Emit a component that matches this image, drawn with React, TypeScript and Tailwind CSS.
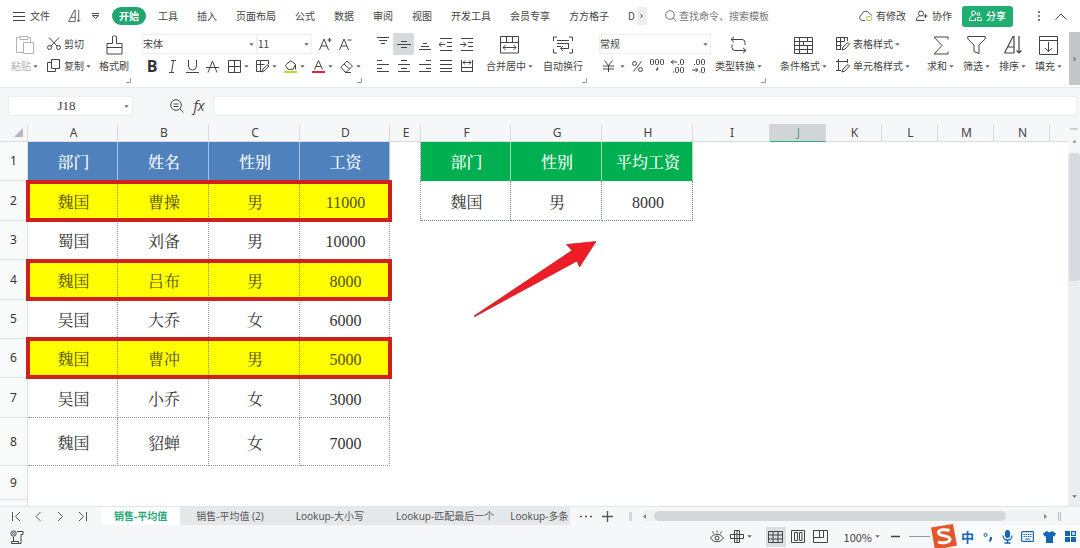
import React from "react";
import clsx from "clsx";

type Kids = { children?: React.ReactNode };

function Svg({ w, h, sw = 1, className, children }: Kids & { w: number; h: number; sw?: number; className?: string }) {
  return (
    <svg
      width={w}
      height={h}
      viewBox={`0 0 ${w} ${h}`}
      fill="none"
      stroke="currentColor"
      strokeWidth={sw}
      className={clsx("shrink-0", className)}
      aria-hidden="true"
    >
      {children}
    </svg>
  );
}

function Caret({ className }: { className?: string }) {
  return (
    <svg width="5" height="3" viewBox="0 0 5 3" className={clsx("shrink-0 text-[#666]", className)} aria-hidden="true">
      <path d="M.3 .2h4.400L2.500 2.800z" fill="currentColor" />
    </svg>
  );
}

function Corner() {
  return (
    <Svg w={5} h={5} className="absolute right-0 bottom-1 text-[#999]">
      <path d="M4.5 0V4.5H0" />
    </Svg>
  );
}

function BigButton({ label, caret, icon, muted }: { label: string; caret?: boolean; icon: React.ReactNode; muted?: boolean }) {
  return (
    <button className={clsx("flex shrink-0 flex-col items-center", muted && "text-[#b3b3b3]")}>
      <span className="flex h-6 items-center justify-center">{icon}</span>
      <span className="flex h-[18px] items-center gap-[2px]">
        {label}
        {caret && <Caret />}
      </span>
    </button>
  );
}

function RowButton({ label, caret, icon }: { label: string; caret?: boolean; icon: React.ReactNode }) {
  return (
    <button className="flex h-[22px] items-center gap-[3px]">
      {icon}
      <span className="flex items-center gap-[2px]">
        {label}
        {caret && <Caret />}
      </span>
    </button>
  );
}

function Tool({ name, caret, children }: Kids & { name: string; caret?: boolean }) {
  return (
    <button
      aria-label={name}
      className={clsx("flex h-[22px] items-center", caret ? "w-7 gap-[3px] pl-[6px]" : "w-5 justify-center")}
    >
      {children}
      {caret && <Caret />}
    </button>
  );
}

function Select({ name, value, className }: { name: string; value: string; className: string }) {
  return (
    <span className={clsx("relative flex h-5 items-center", className)}>
      <select aria-label={name} className="h-full w-full appearance-none border border-[#eeeff0] bg-white outline-none">
        <option>{value}</option>
      </select>
      <Caret className="pointer-events-none absolute right-[3px]" />
    </span>
  );
}

const alignIcons: { name: string; d: string }[][] = [
  [
    { name: "顶端对齐", d: "M1 .5h12M3 3.5h8M5 6.5h4" },
    { name: "垂直居中", d: "M4 4.5h6M0 7.5h14M4 10.5h6" },
    { name: "底端对齐", d: "M5 6.5h4M3 9.5h8M1 12.5h12" },
    { name: "减少缩进", d: "M1 1.5h12M8 5.5h5M8 9.5h5M1 13.5h12M0 7.5h6M2.5 5L0 7.5l2.5 2.5" },
    { name: "增加缩进", d: "M1 1.5h12M8 5.5h5M8 9.5h5M1 13.5h12M0 7.5h6M3.5 5L6 7.5 3.5 10" },
  ],
  [
    { name: "左对齐", d: "M1 1.5h5M1 5.5h12M1 9.5h5M1 12.5h12" },
    { name: "居中", d: "M4 1.5h6M1 5.5h12M4 9.5h6M1 12.5h12" },
    { name: "右对齐", d: "M8 1.5h5M1 5.5h12M8 9.5h5M1 12.5h12" },
    { name: "两端对齐", d: "M1 1.5h12M1 5.5h12M1 9.5h12M1 12.5h12" },
    { name: "分散对齐", d: "M1.5 1v12M12.5 1v12M3 3.5h8M5 1.5L3 3.5l2 2M9 1.5l2 2-2 2M2 8.5h10M2 12.5h10" },
  ],
];

const menuTabs = ["工具", "插入", "页面布局", "公式", "数据", "审阅", "视图", "开发工具", "会员专享", "方方格子"];

function SortIcon({ w = 18, h = 20 }: { w?: number; h?: number }) {
  return (
    <svg width={w} height={h} viewBox="0 0 18 20" fill="none" stroke="currentColor" strokeWidth="1.2" className="shrink-0" aria-hidden="true">
      <path d="M.5 18L9 1.5h1V18M4 12h6M.5 18H10M15 1v17M12.5 15.5L15 18l2.5-2.5" />
    </svg>
  );
}

function MenuBar() {
  return (
    <header className="flex h-8 shrink-0 items-center whitespace-nowrap px-[13px]">
      <button className="flex items-center gap-[5px]">
        <Svg w={12} h={10}>
          <path d="M0 1.5h12M0 5.5h12M0 9.5h12" />
        </Svg>
        文件
      </button>
      <button aria-label="排序" className="ml-[18px]">
        <SortIcon w={13} h={14} />
      </button>
      <button aria-label="更多" className="ml-[11px]">
        <Svg w={7} h={6}>
          <path d="M0 .5h7M.5 2.5h6L3.5 5.5z" />
        </Svg>
      </button>
      <button className="ml-[13px] h-[18px] rounded-full bg-[#22a56f] px-[7px] font-bold text-white">开始</button>
      <nav className="ml-3 flex items-center gap-[19px]">
        {menuTabs.map((t) => (
          <button key={t}>{t}</button>
        ))}
        <span className="flex items-center gap-[2px]">
          <button>D</button>
          <button aria-label="更多选项卡" className="flex h-[18px] w-[10px] items-center justify-center bg-[#eceeef]">
            <Svg w={4} h={6}>
              <path d="M.5 1.5L2.5 3 .5 4.5" />
            </Svg>
          </button>
        </span>
      </nav>
      <label className="ml-[18px] flex min-w-0 flex-1 items-center gap-[2px] text-[#777]">
        <Svg w={12} h={12}>
          <circle cx="5" cy="5" r="4.3" />
          <path d="M8 8l3.5 3.5" />
        </Svg>
        <input
          type="search"
          aria-label="搜索"
          placeholder="查找命令、搜索模板"
          className="w-full min-w-0 bg-transparent outline-none placeholder:text-[#777]"
        />
      </label>
      <button className="flex items-center gap-[3px]">
        <Svg w={14} h={12}>
          <path d="M6 10.5H3.5a3 3 0 0 1-.6-5.9A4 4 0 0 1 10.5 3.5a3 3 0 0 1 2 2" stroke="#555" />
          <rect x="7.5" y="6.5" width="5" height="4" rx="1" stroke="#b4c94a" />
        </Svg>
        有修改
      </button>
      <button className="ml-[10px] flex items-center gap-[4px]">
        <Svg w={12} h={12}>
          <circle cx="5" cy="3.5" r="2.5" />
          <path d="M3.5 6C1.5 6.5 .5 8 .5 10.5h8M9.5 4v4M7.5 6h4" />
        </Svg>
        协作
      </button>
      <button className="ml-[10px] flex h-[21px] items-center gap-[4px] rounded-[3px] bg-[#1fad70] px-[7px] font-medium text-white">
        <Svg w={13} h={12}>
          <circle cx="4.5" cy="3" r="2" />
          <circle cx="9.5" cy="4" r="1.5" />
          <path d="M4 5.5C1.5 6 .5 7.5 .5 10.5h6V8M8.5 7.5h2c1.5 0 2 1 2 3h-4z" />
        </Svg>
        分享
      </button>
      <button aria-label="更多" className="ml-6">
        <Svg w={4} h={12}>
          <path d="M2 1v2M2 5v2M2 9v2" strokeWidth="1.4" />
        </Svg>
      </button>
      <button aria-label="收起功能区" className="ml-[14px]">
        <Svg w={12} h={7}>
          <path d="M.5 6.5L6 1l5.5 5.5" />
        </Svg>
      </button>
    </header>
  );
}

function Ribbon() {
  return (
    <div className="flex h-14 shrink-0 items-start whitespace-nowrap border-b border-[#e6e8e9]">
      <div className="relative flex h-full shrink-0 pt-px pl-[11px] pr-[2px]">
        <BigButton
          label="粘贴"
          caret
          muted
          icon={
            <Svg w={19} h={20}>
              <path d="M5 2.5H1.5v15H8M13 2.5h2.5V7M5 1.5h8v3H5zM8.5 7.5h10v11h-10z" />
            </Svg>
          }
        />
        <div className="ml-[9px] flex w-[44px] flex-col items-start">
          <RowButton
            label="剪切"
            icon={
              <Svg w={14} h={14}>
                <circle cx="2.5" cy="10.5" r="2" />
                <circle cx="11.5" cy="10.5" r="2" />
                <path d="M2 .5l8 8.5M12 .5L4 9" />
              </Svg>
            }
          />
          <RowButton
            label="复制"
            caret
            icon={
              <Svg w={14} h={14}>
                <path d="M4.5 .5h8v9h-8zM4.5 3.5h-4v9h8v-3" />
              </Svg>
            }
          />
        </div>
        <div className="ml-2 flex">
          <BigButton
            label="格式刷"
            icon={
              <Svg w={17} h={20}>
                <path d="M6.5 8.5V1.5q2-1.5 4 0v7H16V19H1V8.5zM1 12.5h15" />
              </Svg>
            }
          />
        </div>
        <Corner />
      </div>

      <div className="relative flex h-full shrink-0 flex-col pt-px pl-[11px]">
        <div className="flex h-[22px] items-center">
          <Select name="字体" value="宋体" className="w-[115px]" />
          <Select name="字号" value="11" className="w-[55px]" />
          <button aria-label="增大字号" className="ml-[7px]">
            <Svg w={13} h={14}>
              <path d="M.5 13L5 2l4.5 11M2 9h6M8.5 3h4M10.5 1v4" />
            </Svg>
          </button>
          <button aria-label="减小字号" className="ml-[7px]">
            <Svg w={13} h={14}>
              <path d="M.5 13L5 2l4.5 11M2 9h6M8.5 3h4" />
            </Svg>
          </button>
        </div>
        <div className="flex items-center">
          <Tool name="加粗">
            <span className="font-['Open_Sans',sans-serif] text-base leading-none font-bold text-[#333]">B</span>
          </Tool>
          <Tool name="倾斜">
            <Svg w={9} h={13}>
              <path d="M3 .5h5M1 12.5h5M5.5 .5l-2 12" />
            </Svg>
          </Tool>
          <Tool name="下划线">
            <Svg w={13} h={13}>
              <path d="M2.5 0v6a4 4 0 0 0 8 0V0M0 12.5h13" />
            </Svg>
          </Tool>
          <Tool name="删除线">
            <Svg w={13} h={13}>
              <path d="M2 12.5L6.5 1 11 12.5M0 7.5h13" />
            </Svg>
          </Tool>
          <Tool name="边框" caret>
            <Svg w={13} h={13}>
              <path d="M.5 .5h12v12H.5zM6.5 .5v12M.5 6.5h12" />
            </Svg>
          </Tool>
          <Tool name="绘图边框" caret>
            <Svg w={13} h={13}>
              <path d="M6 11.5H.5V.5h12V4M.5 4.5h8M4.5 .5v11M6 12l1-3 5-4.5 1 1.5-5 5z" />
            </Svg>
          </Tool>
          <Tool name="填充颜色" caret>
            <Svg w={13} h={13}>
              <path d="M3 3.5L7 .8l4.5 3.5-2.5 5H4L1.5 5.5zM11.5 4.5v5" />
              <path d="M0 12h13" stroke="#c3d82c" strokeWidth="2" />
            </Svg>
          </Tool>
          <Tool name="字体颜色" caret>
            <Svg w={13} h={13}>
              <path d="M2.5 9.5L6.5 .5l4 9M4 6.5h5" />
              <path d="M0 12h13" stroke="#e0283c" strokeWidth="2" />
            </Svg>
          </Tool>
          <Tool name="清除" caret>
            <Svg w={13} h={13}>
              <path d="M.8 7L7 1l5.5 5-6 6H5zM4 4l5.5 5M5 12.5h6" />
            </Svg>
          </Tool>
        </div>
        <Corner />
      </div>

      <div className="ml-[10px] flex shrink-0 flex-col pt-px">
        {alignIcons.map((row, r) => (
          <div key={r} className="flex">
            {row.map((a) => (
              <button
                key={a.name}
                aria-label={a.name}
                className={clsx(
                  "flex h-[22px] w-[21px] items-center justify-center rounded-[2px]",
                  a.name === "垂直居中" && "bg-[#d5dadf]",
                )}
              >
                <Svg w={14} h={15}>
                  <path d={a.d} />
                </Svg>
              </button>
            ))}
          </div>
        ))}
      </div>

      <div className="relative flex h-full shrink-0 gap-[10px] pt-px pl-[9px] pr-1">
        <BigButton
          label="合并居中"
          caret
          icon={
            <Svg w={19} h={18}>
              <path d="M.5 .5h18V17H.5zM.5 6.5h18M6.5 .5v6M12.5 .5v6M3 11.5h13M5.5 9L3 11.5 5.5 14M13.5 9l2.5 2.5-2.5 2.5" />
            </Svg>
          }
        />
        <BigButton
          label="自动换行"
          icon={
            <Svg w={20} h={18}>
              <path d="M4 1H.5v4M16 1h3.5v4M.5 13v4H4M19.5 13v4H16M4 4.5h12M4 7.5h12M4 10.5h4M15.5 7.5v5H8M10 10l-2.5 2.5L10 15" />
            </Svg>
          }
        />
        <Corner />
      </div>

      <div className="relative ml-3 flex h-full shrink-0 pt-px pr-1">
        <div className="flex flex-col">
          <div className="flex h-[22px] items-center">
            <Select name="数字格式" value="常规" className="w-[112px]" />
          </div>
          <div className="flex h-[22px] items-center justify-between pl-1 pr-[5px]">
            <button aria-label="货币" className="flex items-center gap-[6px]">
              <Svg w={11} h={12}>
                <path d="M1.5 .5l4 5 4-5M5.5 5.5V12M0 6h11M0 9h11" />
              </Svg>
              <Caret />
            </button>
            <button aria-label="百分比">
              <Svg w={11} h={11}>
                <circle cx="2.5" cy="2.5" r="2" />
                <circle cx="8.5" cy="8.5" r="2" />
                <path d="M9.5 .5l-8 10" />
              </Svg>
            </button>
            <button aria-label="千位分隔">
              <Svg w={15} h={14}>
                <rect x=".5" y=".5" width="3" height="5" rx="1" />
                <rect x="5.5" y=".5" width="3" height="5" rx="1" />
                <rect x="10.5" y=".5" width="3" height="5" rx="1" />
                <path d="M7.5 8.5v1.5l-1 1.5" strokeWidth="1.5" />
              </Svg>
            </button>
            <button aria-label="增加小数位">
              <Svg w={14} h={14}>
                <path d="M0 3h6M2.5 .8L.3 3l2.2 2.2M7 5.5h1M2 13h1" />
                <rect x="9.5" y=".5" width="3" height="5" rx="1" />
                <rect x="4.5" y="8.5" width="3" height="5" rx="1" />
                <rect x="9.5" y="8.5" width="3" height="5" rx="1" />
              </Svg>
            </button>
            <button aria-label="减少小数位">
              <Svg w={14} h={14}>
                <path d="M0 11h6M3.5 8.8L5.7 11l-2.2 2.2M7.5 13h1M2 5.5h1" />
                <rect x="4.5" y=".5" width="3" height="5" rx="1" />
                <rect x="9.5" y=".5" width="3" height="5" rx="1" />
                <rect x="9.5" y="8.5" width="3" height="5" rx="1" />
              </Svg>
            </button>
          </div>
        </div>
        <div className="ml-1 flex">
          <BigButton
            label="类型转换"
            caret
            icon={
              <Svg w={17} h={18}>
                <path d="M4 .8L1 3.5l3 2.7M1 3.5h11a3 3 0 0 1 3 3V9M13 11.8l3 2.7-3 2.7M16 14.5H5a3 3 0 0 1-3-3V8.5" />
              </Svg>
            }
          />
        </div>
        <Corner />
      </div>

      <div className="ml-[14px] flex shrink-0 pt-px">
        <BigButton
          label="条件格式"
          caret
          icon={
            <Svg w={19} h={17}>
              <path d="M.5 .5h18v16H.5zM.5 4.5h18M.5 8.5h18M.5 12.5h18M5.5 .5v16M9.5 4.5v4M13.5 .5v4M13.5 8.5v8" />
            </Svg>
          }
        />
        <div className="ml-[9px] flex flex-col items-start">
          <RowButton
            label="表格样式"
            caret
            icon={
              <Svg w={14} h={14}>
                <path d="M5 12.5H.5V.5h11V4M.5 4.5h8M.5 8.5h5M4.5 .5v12M8.5 .5v4M6 13l1-3 5-4.5 1.5 1.5L9 12z" />
              </Svg>
            }
          />
          <RowButton
            label="单元格样式"
            caret
            icon={
              <Svg w={14} h={14}>
                <path d="M0 2.5h12M2.5 0v12M0 11.5h5M11.5 0v4M6 13l1-3 5-4.5 1.5 1.5L9 12z" />
              </Svg>
            }
          />
        </div>
      </div>

      <div className="ml-[17px] flex shrink-0 gap-[9px] pt-px">
        <BigButton
          label="求和"
          caret
          icon={
            <Svg w={16} h={19}>
              <path d="M15 3.5V1H1l8 8.5L1 18h14v-2.5" />
            </Svg>
          }
        />
        <BigButton
          label="筛选"
          caret
          icon={
            <Svg w={19} h={19}>
              <path d="M.8 .5h17.4V3L12 9v8.5l-5-2V9L.8 3z" />
            </Svg>
          }
        />
        <BigButton label="排序" caret icon={<SortIcon />} />
        <BigButton
          label="填充"
          caret
          icon={
            <Svg w={19} h={19}>
              <path d="M.5 .5h18v18H.5zM.5 4.5h18M9.5 6v9.5M6 12l3.5 3.5L13 12" />
            </Svg>
          }
        />
      </div>
      <button aria-label="向右滚动" className="ml-auto flex h-[53px] w-[11px] shrink-0 items-center justify-center bg-[#c3c7c9]">
        <Svg w={4} h={6}>
          <path d="M.5 1L2.5 3 .5 5" />
        </Svg>
      </button>
    </div>
  );
}

function FormulaBar() {
  return (
    <div className="flex h-9 shrink-0 items-center bg-[#f5f7f8] pl-2 pr-[3px]">
      <div className="flex h-5 w-[125px] items-center border border-[#eceeef] bg-white pr-[3px]">
        <input
          aria-label="名称框"
          defaultValue="J18"
          className="w-full min-w-0 bg-transparent text-center font-['Liberation_Serif',serif] text-[13px] outline-none"
        />
        <Caret />
      </div>
      <button aria-label="缩小" className="ml-[37px]">
        <Svg w={14} h={14}>
          <circle cx="6" cy="6" r="5.3" />
          <path d="M10 10l3.5 3.5M3.5 5h5M3.5 7.5h5" />
        </Svg>
      </button>
      <button aria-label="插入函数" className="ml-2 w-[14px] font-['Open_Sans',sans-serif] text-sm leading-none italic">
        fx
      </button>
      <input aria-label="编辑栏" className="ml-[7px] h-5 min-w-0 flex-1 border border-[#eceeef] bg-white px-1 outline-none" />
    </div>
  );
}

const columns: { id: string; width: string }[] = [
  { id: "A", width: "w-[90px]" },
  { id: "B", width: "w-[91px]" },
  { id: "C", width: "w-[91px]" },
  { id: "D", width: "w-[90px]" },
  { id: "E", width: "w-[31px]" },
  { id: "F", width: "w-[90px]" },
  { id: "G", width: "w-[91px]" },
  { id: "H", width: "w-[91px]" },
  { id: "I", width: "w-[77px]" },
  { id: "J", width: "w-[56px]" },
  { id: "K", width: "w-[56px]" },
  { id: "L", width: "w-[56px]" },
  { id: "M", width: "w-[56px]" },
  { id: "N", width: "w-[56px]" },
];

type Row = { height: string; cells?: string[]; result?: string[]; kind?: "head" | "hit" };

const rows: Row[] = [
  { height: "h-[39px]", kind: "head", cells: ["部门", "姓名", "性别", "工资"], result: ["部门", "性别", "平均工资"] },
  { height: "h-10", kind: "hit", cells: ["魏国", "曹操", "男", "11000"], result: ["魏国", "男", "8000"] },
  { height: "h-[39px]", cells: ["蜀国", "刘备", "男", "10000"] },
  { height: "h-10", kind: "hit", cells: ["魏国", "吕布", "男", "8000"] },
  { height: "h-[39px]", cells: ["吴国", "大乔", "女", "6000"] },
  { height: "h-[39px]", kind: "hit", cells: ["魏国", "曹冲", "男", "5000"] },
  { height: "h-10", cells: ["吴国", "小乔", "女", "3000"] },
  { height: "h-12", cells: ["魏国", "貂蝉", "女", "7000"] },
  { height: "h-[34px]" },
  { height: "h-10" },
];

const cellBase = "border-r border-b pt-1 pr-0 pb-0 pl-[2px] text-center";

function Sheet() {
  return (
    <main className="flex min-h-0 flex-1 overflow-hidden">
      <div className="relative min-w-0 flex-1 overflow-hidden">
        <table className="w-full table-fixed border-separate border-spacing-0">
          <colgroup>
            <col className="w-7" />
            {columns.map((c) => (
              <col key={c.id} className={c.width} />
            ))}
            <col />
          </colgroup>
          <thead>
            <tr className="h-[18px] bg-[#f5f7f8] font-['Noto_Sans',sans-serif] text-xs leading-none">
              <th className="border-r border-b border-[#d9dbdc] p-0">
                <svg width="9" height="9" viewBox="0 0 9 9" className="mr-1 ml-auto" aria-hidden="true">
                  <path d="M9 0v9H0z" fill="#b5b7b9" />
                </svg>
              </th>
              {columns.map((c) => (
                <th
                  key={c.id}
                  scope="col"
                  className={clsx(
                    "border-r border-b py-0 pr-0 pl-[2px] font-normal",
                    c.id === "J" ? "border-r-[#d9dbdc] border-b-[#2fae7b] bg-[#d1d5d7] text-[#5f9a84]" : "border-[#d9dbdc]",
                  )}
                >
                  {c.id}
                </th>
              ))}
              <th className="border-b border-[#d9dbdc] p-0" />
            </tr>
          </thead>
          <tbody className="font-['Liberation_Serif','Noto_Serif_CJK_SC','Noto_Sans_CJK_SC',serif] text-base leading-none text-[#333]">
            {rows.map((row, i) => (
              <tr key={i} className={row.height}>
                <th
                  scope="row"
                  className="border-r border-b border-[#dfe1e2] bg-[#f9fafa] p-0 font-['Noto_Sans',sans-serif] text-xs leading-none font-normal"
                >
                  {i < 9 ? i + 1 : ""}
                </th>
                {row.cells ? (
                  row.cells.map((c, j) => (
                    <td
                      key={j}
                      className={clsx(
                        cellBase,
                        row.kind === "head" && "border-r-[#a9c1e4] border-b-[#4f81bd] bg-[#4f81bd] font-medium text-white",
                        row.kind === "hit" && "border-dotted border-[#8a8f35] bg-[#ffff00] text-[#55500a]",
                        !row.kind && "border-dotted border-[#8f9a98]",
                      )}
                    >
                      {c}
                    </td>
                  ))
                ) : (
                  <td colSpan={4} className="p-0" />
                )}
                <td className={clsx("p-0", row.result && "border-r border-dotted border-[#8f9a98]")} />
                {row.result ? (
                  row.result.map((c, j) => (
                    <td
                      key={j}
                      className={clsx(
                        cellBase,
                        row.kind === "head"
                          ? "border-r-[#9edbb6] border-b-[#00b050] bg-[#00b050] font-medium text-white"
                          : "border-dotted border-[#6f8f80]",
                      )}
                    >
                      {c}
                    </td>
                  ))
                ) : (
                  <td colSpan={3} className="p-0" />
                )}
                <td colSpan={7} className="p-0" />
              </tr>
            ))}
          </tbody>
        </table>
        <div className="pointer-events-none absolute top-14 left-[26px] h-[42px] w-[366px] border-4 border-[#d0201c]" />
        <div className="pointer-events-none absolute top-[135px] left-[26px] h-[42px] w-[366px] border-4 border-[#d0201c]" />
        <div className="pointer-events-none absolute top-[213px] left-[26px] h-[42px] w-[366px] border-4 border-[#d0201c]" />
        <svg
          width="124"
          height="78"
          viewBox="0 0 124 78"
          className="pointer-events-none absolute top-[116px] left-[473px]"
          aria-hidden="true"
        >
          <path d="M1 76L99 10.5 93.5 4.5 123 1.5 106.5 27 104 21 2 76.5z" fill="#ee1c24" stroke="#b3202c" strokeWidth=".7" />
        </svg>
      </div>
      <div className="flex w-3 shrink-0 flex-col items-center bg-[#ecedf0]">
        <div className="flex w-full flex-col items-center bg-[#f5f7f8] pt-1 pb-[10px]">
          <Svg w={8} h={3} className="text-[#aaa]">
            <path d="M0 1h8" />
          </Svg>
          <svg width="5" height="4" viewBox="0 0 5 4" className="mt-2 text-[#888]" aria-hidden="true">
            <path d="M.5 3.5h4L2.5 1z" fill="currentColor" />
          </svg>
        </div>
        <div className="h-32 w-[11px] rounded-[3px] bg-[#d8dae1]" />
        <Caret className="mt-auto mb-2" />
      </div>
    </main>
  );
}

const sheetTabs = ["销售-平均值", "销售-平均值 (2)", "Lookup-大小写", "Lookup-匹配最后一个"];

function SheetTabs() {
  const nav = [
    { name: "第一张", d: "M1.5 1v9M9 1L4.5 5.5 9 10" },
    { name: "上一张", d: "M7.5 1L3 5.5 7.5 10" },
    { name: "下一张", d: "M3 1l4.5 4.5L3 10" },
    { name: "最后一张", d: "M9.5 1v9M2 1l4.5 4.5L2 10" },
  ];
  return (
    <div className="flex h-[19px] shrink-0 items-center whitespace-nowrap border-t border-[#e3e5e6] bg-[#f5f7f8] text-[#555]">
      <div className="flex w-[101px] shrink-0 gap-[11px] pl-[11px]">
        {nav.map((n) => (
          <button key={n.name} aria-label={n.name}>
            <Svg w={11} h={11}>
              <path d={n.d} />
            </Svg>
          </button>
        ))}
      </div>
      <div className="flex h-full shrink-0 font-['Noto_Sans','Noto_Sans_CJK_SC',sans-serif]">
        {sheetTabs.map((t, i) => (
          <button
            key={t}
            className={clsx("h-full shrink-0", i === 0 ? "bg-white px-[13px] font-bold text-[#27a877]" : "bg-[#e6e9eb] px-4")}
          >
            {t}
          </button>
        ))}
        <button className="h-full shrink-0 bg-[#e6e9eb] pr-[2px]">Lookup-多条</button>
      </div>
      <button aria-label="全部工作表" className="ml-[10px]">
        <Svg w={12} h={3}>
          <path d="M0 1.5h2M5 1.5h2M10 1.5h2" strokeWidth="1.5" />
        </Svg>
      </button>
      <button aria-label="新建工作表" className="ml-[10px]">
        <Svg w={11} h={11} sw={1.3}>
          <path d="M0 5.5h11M5.5 0v11" />
        </Svg>
      </button>
      <span className="ml-4 h-[9px] w-[3px] shrink-0 bg-[#d4d7d9]" />
      <div className="ml-[11px] flex min-w-0 flex-1 items-center bg-[#eff1f2]">
        <svg width="3" height="5" viewBox="0 0 3 5" aria-hidden="true">
          <path d="M3 0v5L0 2.5z" fill="#888" />
        </svg>
        <div className="ml-2 mr-[38px] h-[10px] flex-1 rounded-full bg-[#d5d8da]" />
        <svg width="3" height="5" viewBox="0 0 3 5" aria-hidden="true">
          <path d="M0 0v5l3-2.5z" fill="#888" />
        </svg>
      </div>
      <span className="ml-[11px] mr-[19px] h-[9px] w-[3px] shrink-0 border-x border-[#bbb]" />
    </div>
  );
}

function StatusBar() {
  return (
    <footer className="flex h-[23px] shrink-0 items-center bg-[#f5f7f8] pl-[10px]">
      <button aria-label="宏">
        <Svg w={14} h={14}>
          <circle cx="3.5" cy="3.5" r="2.7" />
          <circle cx="3.5" cy="3.5" r="1" />
          <path d="M7 1.5h6v3h-2v7M3.5 7v4M1.5 11.5h7v2h-7zM8.5 13.5H11v-2" />
        </Svg>
      </button>
      <div className="ml-auto flex items-center">
        <button aria-label="护眼模式">
          <Svg w={14} h={13}>
            <path d="M.5 8C4 3 10 3 13.5 8 10 13 4 13 .5 8zM7 .5v2M2.5 1.5l1 2M11.5 1.5l-1 2" />
            <circle cx="7" cy="8" r="2" />
          </Svg>
        </button>
        <button aria-label="阅读模式" className="ml-[6px] flex items-center gap-[3px]">
          <Svg w={14} h={13}>
            <path d="M4.5 .5h5v12h-5zM.5 4.5h13v4H.5zM7 .5v12" />
          </Svg>
          <Caret />
        </button>
        <button aria-label="普通视图" className="ml-[14px] flex h-5 w-5 items-center justify-center bg-[#dcdfe2]">
          <Svg w={15} h={12}>
            <path d="M.5 .5h14v11H.5zM.5 4h14M.5 8h14M5 .5v11M10 .5v11" />
          </Svg>
        </button>
        <button aria-label="页面布局" className="ml-[5px]">
          <Svg w={14} h={13}>
            <path d="M.5 .5h13v12H.5zM3.5 2.5h3v8h-3zM8.5 2.5H11v8H8.5z" />
          </Svg>
        </button>
        <button aria-label="分页预览" className="ml-2">
          <Svg w={15} h={13}>
            <path d="M.5 .5h14v12H.5zM.5 7.5h10v-7M6.5 .5v7" />
          </Svg>
        </button>
        <button className="ml-4 flex items-center gap-[3px] text-[11px]">
          100%
          <Caret />
        </button>
        <button aria-label="缩小比例" className="ml-[11px]">
          <Svg w={9} h={3}>
            <path d="M0 1.5h9" strokeWidth="1.5" />
          </Svg>
        </button>
        <span className="ml-[9px] h-px w-[21px] bg-[#999]" />
      </div>
      <div className="flex h-[23px] shrink-0 items-center text-[#1565b5]">
        <svg width="28" height="26" viewBox="0 0 28 26" className="shrink-0" aria-hidden="true">
          <path d="M1 3.5L23 0l4 21.5L5 26z" fill="#e4572e" />
          <path
            d="M19.5 6.5c-4-1.5-11-1-11 2.3 0 4 11.5 2.2 11.5 6.2 0 3.8-7.5 4.7-12 2.8"
            fill="none"
            stroke="#fff"
            strokeWidth="3"
          />
        </svg>
        <div className="flex h-full w-[122px] items-center justify-between bg-[#fbfcfd] pl-[3px] pr-1">
          <button className="text-[13px] leading-none font-bold">中</button>
          <button aria-label="标点">
            <Svg w={10} h={10}>
              <circle cx="2.5" cy="3" r="1.5" />
              <path d="M8 5v2L6.5 9.5" strokeWidth="2" />
            </Svg>
          </button>
          <button aria-label="语音输入">
            <Svg w={11} h={14}>
              <rect x="3" y="0" width="5" height="8" rx="2.5" fill="currentColor" stroke="none" />
              <path d="M1 5.5a4.5 4.5 0 0 0 9 0M5.5 10v3M2.5 13h6" strokeWidth="1.3" />
            </Svg>
          </button>
          <button aria-label="软键盘">
            <Svg w={13} h={11}>
              <rect x=".6" y=".6" width="11.8" height="9.8" rx="1" strokeWidth="1.2" />
              <path d="M2.5 3.5h8M2.5 5.5h8" strokeDasharray="1.5 .7" />
              <path d="M4 8h5" />
            </Svg>
          </button>
          <button aria-label="皮肤">
            <Svg w={13} h={12}>
              <path d="M4 0Q6.5 2.5 9 0l4 2.5-1.5 3L10 5v7H3V5l-1.5 .5L0 2.5z" fill="currentColor" stroke="none" />
            </Svg>
          </button>
          <button aria-label="工具箱">
            <Svg w={11} h={11}>
              <path d="M0 0h5v5H0zM0 6h5v5H0zM6 6h5v5H6z" fill="currentColor" stroke="none" />
              <path d="M6.6 .6h3.8v3.8H6.6z" strokeWidth="1.2" />
            </Svg>
          </button>
        </div>
      </div>
    </footer>
  );
}

export default function App() {
  return (
    <div className="flex h-screen flex-col overflow-hidden bg-white font-['Noto_Sans_CJK_SC',sans-serif] text-[10px] leading-[14px] text-[#444]">
      <MenuBar />
      <Ribbon />
      <FormulaBar />
      <Sheet />
      <SheetTabs />
      <StatusBar />
    </div>
  );
}
